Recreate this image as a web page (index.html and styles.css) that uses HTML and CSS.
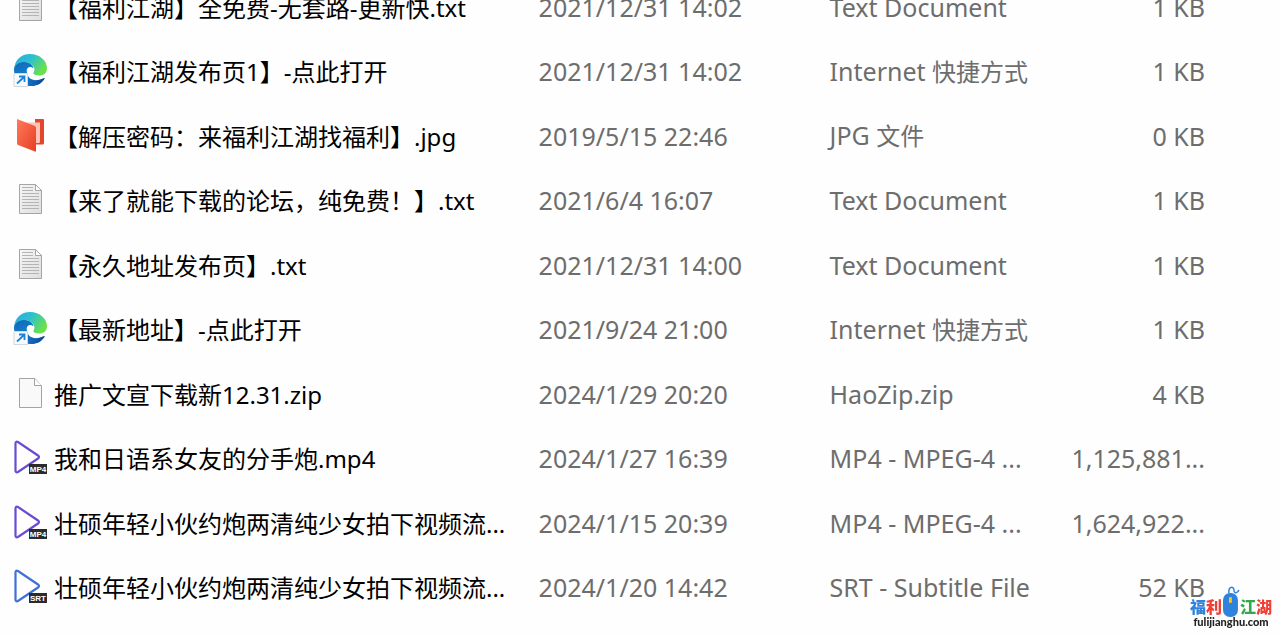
FILE: index.html
```html
<!DOCTYPE html>
<html lang="zh-CN">
<head>
  <meta charset="UTF-8" />
  <title>文件列表</title>
  <link rel="stylesheet" href="styles.css">
</head>
<body>
  <!-- icon set -->
  <svg class="sprite" aria-hidden="true">
    <defs>
      <linearGradient id="gPage" x1="0" y1="0" x2="1" y2="1">
        <stop offset="0" stop-color="#f7f7f7" /><stop offset="1" stop-color="#dedede" />
      </linearGradient>
      <linearGradient id="gEdgeTop" x1="0" y1="0" x2="1" y2="0.5">
        <stop offset="0" stop-color="#2ca9e4" /><stop offset="0.5" stop-color="#2dc0cf" /><stop offset="1" stop-color="#6be04b" />
      </linearGradient>
      <linearGradient id="gEdgeMid" x1="0" y1="0" x2="0.6" y2="1">
        <stop offset="0" stop-color="#1267b5" /><stop offset="1" stop-color="#1590e2" />
      </linearGradient>
      <linearGradient id="gEdgeLow" x1="0" y1="0" x2="1" y2="0">
        <stop offset="0" stop-color="#1578cd" /><stop offset="1" stop-color="#0e4590" />
      </linearGradient>
      <linearGradient id="gRed" x1="0" y1="0" x2="1" y2="1">
        <stop offset="0" stop-color="#ff7a5e" /><stop offset="1" stop-color="#e73f22" />
      </linearGradient>
    </defs>
    <symbol id="txt" viewBox="0 0 34 34">
      <path d="M6.500 2.500H22.500L28.500 8.500V31.500H6.500Z" fill="url(#gPage)" stroke="#a5a5a5" />
      <path d="M22.500 2.500V8.500H28.500Z" fill="#fff" stroke="#a5a5a5" />
      <path d="M9 5.500H20M9 8.500H20M9 11.500H26M9 14.500H26M9 17.500H26M9 20.500H26M9 23.500H26M9 26.500H26" stroke="#b4b4b4" />
    </symbol>
    <symbol id="blank" viewBox="0 0 34 34">
      <path d="M6.500 2.500H22L28.500 10V31.500H6.500Z" fill="#f9f9f9" stroke="#a3a3a3" />
      <path d="M21.500 2.500V9.500H28.500" fill="#fff" stroke="#a3a3a3" />
    </symbol>
    <symbol id="edge" viewBox="0 0 34 34">
      <path d="M1 17C1 10 8 8 13 9C19 10 21 14 20 16C18 13 14 14 14 19C14 26 22 30 31 25C28 31 23 33 17 33C8 33 1 26 1 17Z" fill="url(#gEdgeMid)" />
      <path d="M14 17C12 25 20 31 31 25C31.500 25 32 25.500 31.500 26C28 31 24 33 18 33C12 33 9 25 14 17Z" fill="url(#gEdgeLow)" />
      <path d="M1 17C1.500 7 8 1 17 1C27 1 34 8 34 15C34 20 31 22.500 26 22.500C22 22.500 20 21 20 20C20 19 21.500 18.500 21.500 16.500C21 12 16 9 11 9C5 9 1 13 1 17Z" fill="url(#gEdgeTop)" />
      <path d="M20.500 19.500C21.500 18 21 14 17.500 14C13.500 14 13 18 14.500 21C17 25.500 25 26 31 25C29 24 22 23 20 20.500Z" fill="#fff" />
      <path d="M1 20.500H14.500V33.500H1Z" fill="#f8fbfe" stroke="#d2d8de" />
      <path d="M4 30.500L11 24M6 23.500H11.500V29" fill="none" stroke="#1a86d8" stroke-width="1.800" />
    </symbol>
    <symbol id="jpg" viewBox="0 0 34 34">
      <path d="M4 1H30Q31 1 31 2V25Q31 26.500 29.500 26.500H22V1Z" fill="#e5452c" />
      <path d="M13 4.500H27V23.500Q27 25 25.500 25H20V9Z" fill="#ffc4b8" />
      <path d="M4 1L22 8Q23 8.500 23 10V33Q23 34 22 33.500L5 27Q4 26.500 4 25Z" fill="url(#gRed)" />
    </symbol>
    <symbol id="mp4" viewBox="0 0 34 34">
      <path d="M2.500 3.500Q2.500 1 5 2L25 15.500Q27 17 25 18.500L5 32Q2.500 33 2.500 30.500Z" fill="none" stroke="#684bd2" stroke-width="2.200" />
      <rect x="16" y="24" width="18" height="10" fill="#2b2b2b" />
      <text x="25" y="32" class="tag">MP4</text>
    </symbol>
    <symbol id="srt" viewBox="0 0 34 34">
      <path d="M2.500 3.500Q2.500 1 5 2L25 15.500Q27 17 25 18.500L5 32Q2.500 33 2.500 30.500Z" fill="none" stroke="#3f70d8" stroke-width="2.200" />
      <rect x="16" y="24" width="18" height="10" fill="#2b2b2b" />
      <text x="25" y="32" class="tag">SRT</text>
    </symbol>
  </svg>

  <table class="files">
    <colgroup>
      <col class="col-name"><col class="col-date"><col class="col-type"><col>
    </colgroup>
    <tbody>
      <tr>
        <td><div class="name"><svg><use href="#txt" /></svg><span>【福利江湖】全免费-无套路-更新快.txt</span></div></td>
        <td>2021/12/31 14:02</td>
        <td>Text Document</td>
        <td class="size">1 KB</td>
      </tr>
      <tr>
        <td><div class="name"><svg><use href="#edge" /></svg><span>【福利江湖发布页1】-点此打开</span></div></td>
        <td>2021/12/31 14:02</td>
        <td>Internet <span class="cn">快捷方式</span></td>
        <td class="size">1 KB</td>
      </tr>
      <tr>
        <td><div class="name"><svg><use href="#jpg" /></svg><span>【解压密码：来福利江湖找福利】.jpg</span></div></td>
        <td>2019/5/15 22:46</td>
        <td>JPG <span class="cn">文件</span></td>
        <td class="size">0 KB</td>
      </tr>
      <tr>
        <td><div class="name"><svg><use href="#txt" /></svg><span>【来了就能下载的论坛，纯免费！】.txt</span></div></td>
        <td>2021/6/4 16:07</td>
        <td>Text Document</td>
        <td class="size">1 KB</td>
      </tr>
      <tr>
        <td><div class="name"><svg><use href="#txt" /></svg><span>【永久地址发布页】.txt</span></div></td>
        <td>2021/12/31 14:00</td>
        <td>Text Document</td>
        <td class="size">1 KB</td>
      </tr>
      <tr>
        <td><div class="name"><svg><use href="#edge" /></svg><span>【最新地址】-点此打开</span></div></td>
        <td>2021/9/24 21:00</td>
        <td>Internet <span class="cn">快捷方式</span></td>
        <td class="size">1 KB</td>
      </tr>
      <tr>
        <td><div class="name"><svg><use href="#blank" /></svg><span>推广文宣下载新12.31.zip</span></div></td>
        <td>2024/1/29 20:20</td>
        <td>HaoZip.zip</td>
        <td class="size">4 KB</td>
      </tr>
      <tr>
        <td><div class="name"><svg><use href="#mp4" /></svg><span>我和日语系女友的分手炮.mp4</span></div></td>
        <td>2024/1/27 16:39</td>
        <td>MP4 - MPEG-4 ...</td>
        <td class="size">1,125,881...</td>
      </tr>
      <tr>
        <td><div class="name"><svg><use href="#mp4" /></svg><span>壮硕年轻小伙约炮两清纯少女拍下视频流...</span></div></td>
        <td>2024/1/15 20:39</td>
        <td>MP4 - MPEG-4 ...</td>
        <td class="size">1,624,922...</td>
      </tr>
      <tr>
        <td><div class="name"><svg><use href="#srt" /></svg><span>壮硕年轻小伙约炮两清纯少女拍下视频流...</span></div></td>
        <td>2024/1/20 14:42</td>
        <td>SRT - Subtitle File</td>
        <td class="size">52 KB</td>
      </tr>
    </tbody>
  </table>

  <div class="watermark">
    <div class="brand">
      <span class="blue">福</span><span class="red">利</span>
      <svg viewBox="0 0 18 32">
        <path d="M7 7C6 0 12 0 12 4C12 8 16 7 17 4" fill="none" stroke="#2f83dc" stroke-width="1.500" />
        <rect x="1" y="7" width="15" height="24" rx="7" fill="#2f83dc" />
        <rect x="7" y="11" width="3" height="6" rx="1" fill="#f5c518" />
      </svg>
      <span class="green">江</span><span class="red">湖</span>
    </div>
    <div class="domain">fulijianghu.com</div>
  </div>
</body>
</html>
```
FILE: styles.css
```css
body { margin:0; background:#fefefe; color:#6d6d6d; font-family:"Noto Sans", "Noto Sans CJK SC", sans-serif; font-size:25px; text-spacing-trim:space-all; }
.sprite { position:absolute; width:0; height:0; }
.tag { font:bold 8px "Liberation Sans", sans-serif; fill:#fff; text-anchor:middle; }

/* list is scrolled, first row is partly above the top edge */
.files { width:100%; margin-top:-25px; table-layout:fixed; border-collapse:collapse; }
.col-name { width:42%; }
.col-date { width:291px; }
.col-type { width:226px; }
tr { height:65px; }
tr:nth-child(even) { height:64px; }
td { padding:0 0 2px 1px; line-height:32px; white-space:nowrap; }
td:first-child { padding:0; }
.size { text-align:right; padding-right:75px; }
.cn { font-size:24px; }

.name { display:flex; align-items:center; gap:7px; padding-left:13px; color:#000; font-size:24px; }
.name svg { width:34px; height:34px; margin-bottom:4px; flex:none; }

.watermark { position:fixed; right:8px; bottom:7px; width:82px; text-align:center; }
.brand { display:flex; align-items:center; justify-content:center; font:900 16px/16px "Noto Sans CJK SC", sans-serif; }
.brand svg { width:18px; height:32px; margin:-10px 0 -2px; }
.blue { color:#2f83dc; }
.red { color:#ee4036; }
.green { color:#2fa84f; }
.domain { color:#222; font:900 11px/12px Lato, sans-serif; }
```
